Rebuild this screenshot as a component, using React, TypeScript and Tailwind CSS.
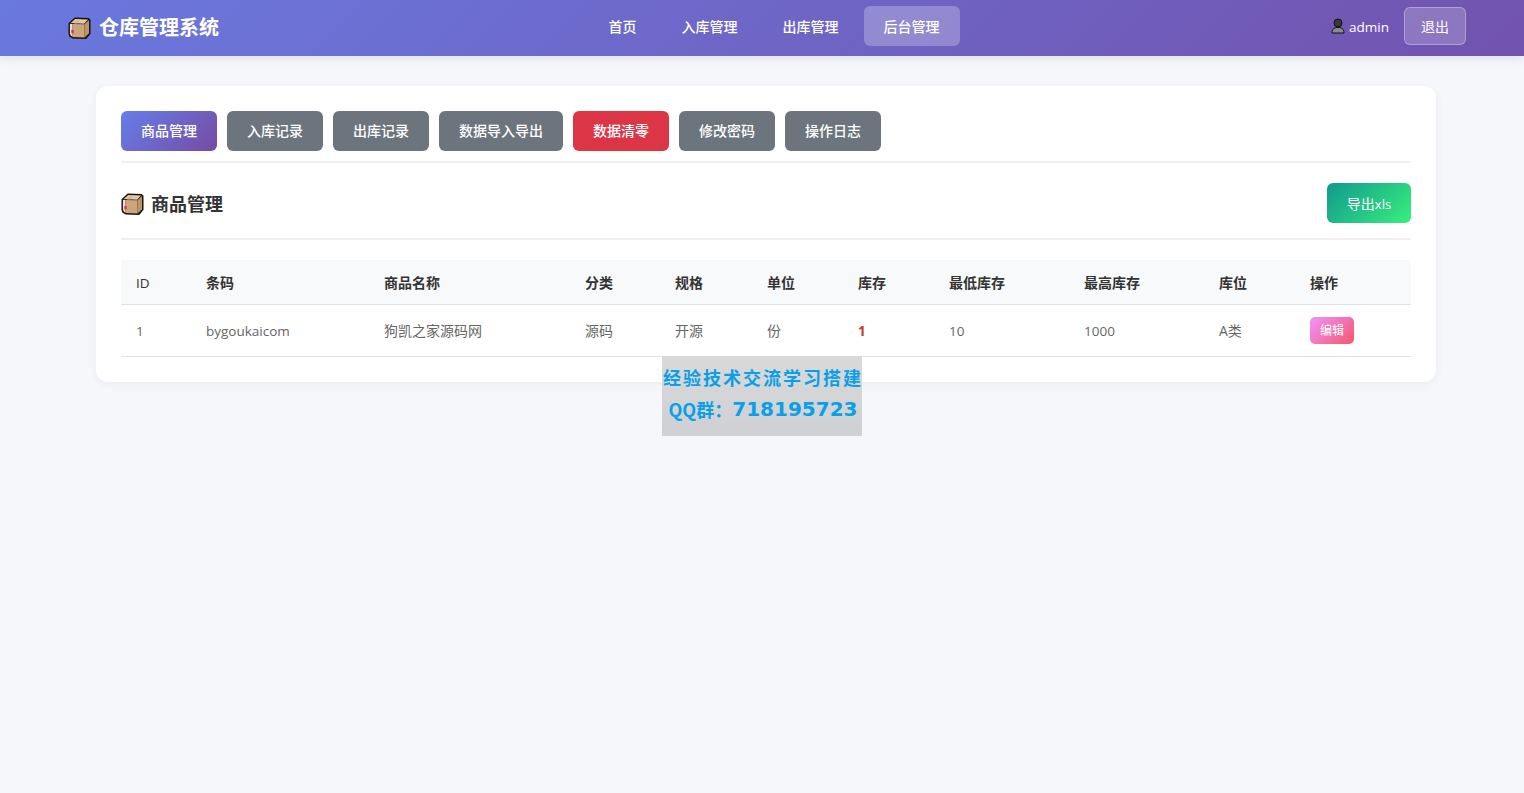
const FONT = "font-['Open_Sans','Noto_Sans_CJK_SC',sans-serif]";

function BoxIcon({ className }: { className: string }) {
  return (
    <svg viewBox="0 0 24 24" className={className}>
      <path d="M7 1 L21.5 1.5 L23.5 3.5 L23.5 18 L19 23.5 L5 23 L1.5 21 L0.5 18 L0.5 7 Z" fill="#15130f" />
      <path d="M7.5 2.6 L21 3 L16.8 7.6 L2.8 6.9 Z" fill="#e6c6aa" />
      <path d="M2 7.5 L4.8 7.7 L4.8 21 L3 20 L2 17.5 Z" fill="#efdccb" />
      <path d="M4.8 7.7 L17.2 8.2 L17.4 22 L4.8 21.4 Z" fill="#cda57a" />
      <path d="M17.2 8.2 L22 3.6 L22 17.4 L17.4 22 Z" fill="#bd9468" />
      <path d="M3.4 14 L6 14.2 L6 17.6 L3.4 17.4 Z" fill="#d8384f" />
      <path d="M10 2.8 L13.6 2.9 L9.4 7.2 L5.8 7 Z" fill="#dcb999" />
    </svg>
  );
}

function UserIcon() {
  return (
    <svg viewBox="0 0 16 16" className="h-[16px] w-[16px]">
      <circle cx="8" cy="5" r="4" fill="#3a3a3a" stroke="#111" strokeWidth="1" />
      <path d="M2 15 C2 10.5 5 9.5 8 9.5 C11 9.5 14 10.5 14 15 Z" fill="#8c8c8c" stroke="#111" strokeWidth="1" />
    </svg>
  );
}

const navItems = [
  { label: "首页", active: false },
  { label: "入库管理", active: false },
  { label: "出库管理", active: false },
  { label: "后台管理", active: true },
];

const tabs = [
  { label: "商品管理", cls: "bg-[linear-gradient(135deg,#667eea,#764ba2)]" },
  { label: "入库记录", cls: "bg-[#6c757d]" },
  { label: "出库记录", cls: "bg-[#6c757d]" },
  { label: "数据导入导出", cls: "bg-[#6c757d]" },
  { label: "数据清零", cls: "bg-[#dc3545]" },
  { label: "修改密码", cls: "bg-[#6c757d]" },
  { label: "操作日志", cls: "bg-[#6c757d]" },
];

const columns = [
  { label: "ID", width: "w-[70px]" },
  { label: "条码", width: "w-[178px]" },
  { label: "商品名称", width: "w-[201px]" },
  { label: "分类", width: "w-[90px]" },
  { label: "规格", width: "w-[92px]" },
  { label: "单位", width: "w-[91px]" },
  { label: "库存", width: "w-[91px]" },
  { label: "最低库存", width: "w-[135px]" },
  { label: "最高库存", width: "w-[135px]" },
  { label: "库位", width: "w-[91px]" },
  { label: "操作", width: "w-[116px]" },
];

export default function App() {
  return (
    <div className={`min-h-[793px] bg-[#f5f7fa] ${FONT}`}>
      <header className="flex h-[56px] items-center justify-between bg-[linear-gradient(135deg,#6a79df,#7253ae)] pb-[4px] pl-[68px] pr-[58px] shadow-[0_2px_10px_rgba(0,0,0,0.1)]">
        <div className="mt-[3px] flex w-[314px] items-center gap-[8px]">
          <BoxIcon className="h-[24px] w-[23px]" />
          <span className="text-[20px] font-bold text-white">仓库管理系统</span>
        </div>
        <nav className="flex items-center gap-[5px]">
          {navItems.map((item) => (
            <a
              key={item.label}
              className={`flex h-[40px] items-center rounded-[6px] px-[20px] text-[14px] font-medium text-white ${item.active ? "bg-white/25" : ""}`}
            >
              {item.label}
            </a>
          ))}
        </nav>
        <div className="flex w-[300px] items-center justify-end">
          <UserIcon />
          <span className="ml-[3px] pt-[2px] text-[13.5px] text-white">admin</span>
          <button className="ml-[15px] h-[38px] w-[62px] rounded-[6px] border border-white/30 bg-white/20 text-[14px] text-white">
            退出
          </button>
        </div>
      </header>

      <main className="pl-[96px] pr-[88px] pt-[30px]">
        <section className="relative rounded-[12px] bg-white p-[25px] shadow-[0_2px_10px_rgba(0,0,0,0.05)]">
          <div className="flex gap-[10px] border-b-2 border-[#f0f0f0] pb-[10px]">
            {tabs.map((tab) => (
              <button
                key={tab.label}
                className={`h-[40px] rounded-[6px] px-[20px] pb-[1px] text-[14px] font-medium text-white ${tab.cls}`}
              >
                {tab.label}
              </button>
            ))}
          </div>

          <div className="mt-[20px] flex h-[57px] items-start justify-between border-b-2 border-[#f0f0f0] pb-[15px]">
            <h2 className="flex h-[42px] items-center gap-[7px] text-[18px] font-semibold text-[#333333]">
              <BoxIcon className="h-[24px] w-[23px]" />
              商品管理
            </h2>
            <button className="h-[40px] w-[84px] rounded-[6px] bg-[linear-gradient(135deg,#11998e,#38ef7d)] pt-[1px] text-[14px] text-white">
              导出<span className="text-[13px]">xls</span>
            </button>
          </div>

          <table className="mt-[20px] w-full table-fixed border-collapse text-[14px]">
            <thead>
              <tr className="h-[44px] border-b border-[#dee2e6] bg-[#f8f9fa] text-left text-[#333333]">
                {columns.map((col) => (
                  <th key={col.label} className={`px-[15px] pt-[2px] font-semibold ${col.width}`}>
                    {col.label === "ID" ? <span className="text-[13.5px] font-medium">ID</span> : col.label}
                  </th>
                ))}
              </tr>
            </thead>
            <tbody>
              <tr className="h-[52px] border-b border-[#dee2e6] text-[#666666]">
                <td className="px-[15px] pt-[2px] text-[13.5px]">1</td>
                <td className="px-[15px] pt-[2px] text-[13.5px]">bygoukaicom</td>
                <td className="px-[15px]">狗凯之家源码网</td>
                <td className="px-[15px]">源码</td>
                <td className="px-[15px]">开源</td>
                <td className="px-[15px]">份</td>
                <td className="px-[15px] pt-[2px] text-[13.5px] font-bold text-[#c0392b]">1</td>
                <td className="px-[15px] pt-[2px] text-[13.5px]">10</td>
                <td className="px-[15px] pt-[2px] text-[13.5px]">1000</td>
                <td className="px-[15px]">A类</td>
                <td className="px-[15px]">
                  <button className="h-[27px] w-[44px] rounded-[5px] bg-[linear-gradient(135deg,#f093fb,#f5576c)] pt-[1px] text-[12px] text-white">
                    编辑
                  </button>
                </td>
              </tr>
            </tbody>
          </table>

          <div className="absolute left-[566px] top-[270px] flex h-[80px] w-[200px] flex-col items-center bg-gradient-to-b from-[#d9d9d9] to-[#ced0d4] pl-[2px] pt-[7px] font-['Noto_Sans_CJK_SC',sans-serif] text-[#0a9fe6]">
            <span className="whitespace-nowrap text-[18px] font-semibold leading-[28px] tracking-[2px]">经验技术交流学习搭建</span>
            <span className="mt-[3px] flex items-center whitespace-nowrap text-[18px] font-semibold leading-[30px]">
              QQ群：
              <span className="font-['DejaVu_Sans',sans-serif] text-[20px] font-bold">718195723</span>
            </span>
          </div>
        </section>
      </main>
    </div>
  );
}
